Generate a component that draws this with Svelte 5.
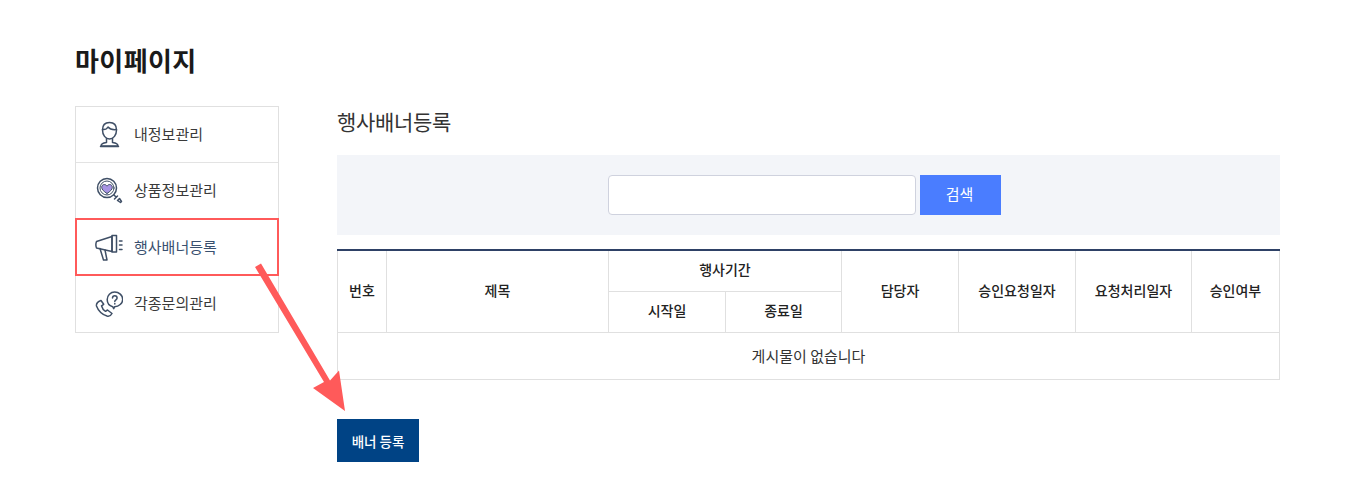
<script>
  const menu = [
    { label: '내정보관리', icon: 'user' },
    { label: '상품정보관리', icon: 'search' },
    { label: '행사배너등록', icon: 'horn', active: true },
    { label: '각종문의관리', icon: 'phone' }
  ];

  const tailHeads = ['담당자', '승인요청일자', '요청처리일자', '승인여부'];
</script>

<div class="page">
  <h1>마이페이지</h1>

  <div class="layout">
    <nav class="side">
      {#each menu as item}
        <a class="side-item" class:active={item.active} href="#top">
          <span class="icon">
            {#if item.icon === 'user'}
              <svg viewBox="0 0 28 28" width="28" height="28">
                <path d="M7.500 10c0-5 3-7.500 7-7.500s7 2.500 7 7.500c0 5-3 9-7 9s-7-4-7-9z" />
                <path d="M7.500 9.500c2.500.3 4.500-.7 5.500-2.500 1.500 1.800 4.500 3 8.500 2.500" />
                <path d="M11.500 18.500v4c-2.500.3-5.500.6-5.500 3.500h17c0-2.900-3-3.200-5.500-3.500v-4" />
                <path d="M5.500 26.500h18" />
              </svg>
            {:else if item.icon === 'search'}
              <svg viewBox="0 0 28 28" width="28" height="28">
                <circle cx="12" cy="12" r="9.500" />
                <circle cx="12" cy="12" r="7" stroke-width="1" />
                <path class="heart" d="M12 17.500c-3.400-2.200-5.300-4-5.300-6.200 0-1.700 1.100-2.800 2.600-2.800 1.100 0 2.100.6 2.700 1.700.6-1.100 1.600-1.700 2.700-1.700 1.500 0 2.600 1.100 2.600 2.800 0 2.200-1.900 4-5.300 6.200z" />
                <path d="M19 19l2 2M19.500 23l3-3M22.500 24.500l2-2 2 3-1 1z" />
              </svg>
            {:else if item.icon === 'horn'}
              <svg viewBox="0 0 28 28" width="28" height="28">
                <path d="M1.500 8.500l15.500-5v15l-15.500-3.500c-.8-2-.8-4.500 0-6.500z" />
                <path d="M17 2.500v16.500h4.500v-16.500z" />
                <path d="M5 15.500l3.500 11.500h3.500l-2-10" />
                <path d="M24.500 8h2.500M24.500 12h2.500M24.500 16.500h2.500" />
              </svg>
            {:else}
              <svg viewBox="0 0 28 28" width="28" height="28">
                <path d="M6 10.500c-2.500 1-5 3-4.500 5.500 1.500 4 5.500 8.500 10.500 10 2 .5 4-.5 5-2.500l-4.500-3.500-2 1.300c-1.800-1-3.500-3.500-4-5.500l2.200-1.500z" />
                <path d="M19.700 2c-4.200 0-7.500 3.300-7.500 7.500 0 3.500 2.300 6.300 5.500 7.200l1 2 1-2c4-.2 8-3.200 8-7.200 0-4.200-3.800-7.500-8-7.500z" />
                <path d="M17.500 8c0-3 4.600-3 4.600 0 0 1.800-2.300 1.800-2.300 3.500" />
                <path d="M19.800 13.400v.6" />
              </svg>
            {/if}
          </span>
          <span class="label">{item.label}</span>
        </a>
      {/each}
    </nav>

    <main class="content">
      <h2>행사배너등록</h2>

      <div class="search-box">
        <input type="text" aria-label="검색어" />
        <button type="button" class="search-btn">검색</button>
      </div>

      <table>
        <colgroup>
          <col style="width: 49px" />
          <col style="width: 222px" />
          <col style="width: 117px" />
          <col style="width: 116px" />
          <col style="width: 117px" />
          <col style="width: 117px" />
          <col style="width: 116px" />
          <col style="width: 88px" />
        </colgroup>
        <thead>
          <tr>
            <th rowspan="2">번호</th>
            <th rowspan="2">제목</th>
            <th colspan="2">행사기간</th>
            {#each tailHeads as head}
              <th rowspan="2">{head}</th>
            {/each}
          </tr>
          <tr>
            <th>시작일</th>
            <th>종료일</th>
          </tr>
        </thead>
        <tbody>
          <tr>
            <td colspan="8">게시물이 없습니다</td>
          </tr>
        </tbody>
      </table>

      <button type="button" class="add-btn">배너 등록</button>
    </main>
  </div>

  <!-- annotation arrow laid over the screenshot -->
  <svg class="arrow" viewBox="0 0 1361 504" width="1361" height="504" aria-hidden="true">
    <path d="M255 267l6-3.500 69 117 9-10 6 40.500-32-23 11-6z" />
  </svg>
</div>

<style>
  :global(body) {
    margin: 0;
    background: #fff;
  }

  .page {
    position: relative;
    width: 1361px;
    height: 504px;
    padding: 42px 0 0 75px;
    box-sizing: border-box;
    overflow: hidden;
    font-family: "Noto Sans CJK KR", "Noto Sans", sans-serif;
    color: #222;
  }

  h1 {
    margin: 0 0 26px;
    height: 38px;
    font-size: 26px;
    line-height: 36px;
    font-weight: 700;
    letter-spacing: 0.4px;
    color: #1a1a1a;
  }

  .layout {
    display: flex;
    align-items: flex-start;
    gap: 58px;
  }

  .side {
    display: flex;
    flex-direction: column;
    width: 204px;
    height: 227px;
    box-sizing: border-box;
    border: 1px solid #e0e0e0;
  }

  .side-item {
    position: relative;
    display: flex;
    align-items: center;
    gap: 11px;
    height: 56px;
    padding-left: 19px;
    box-sizing: border-box;
    border-bottom: 1px solid #e3e3e3;
    font-size: 15px;
    color: #3a3a3a;
    text-decoration: none;
  }

  .side-item:last-child {
    border-bottom: 0;
  }

  .side-item.active {
    height: 59px;
    margin: -1px -1px 0;
    padding-left: 18px;
    border: 2px solid #ff5a5a;
    color: #39506f;
  }

  .label {
    padding-bottom: 2px;
  }

  .side-item.active .label {
    padding-bottom: 0;
  }

  .side-item:last-child .label {
    padding-bottom: 4px;
  }

  .icon {
    display: flex;
    width: 28px;
    height: 28px;
  }

  .icon svg {
    fill: none;
    stroke: #3f4f66;
    stroke-width: 1.5;
    stroke-linecap: round;
    stroke-linejoin: round;
  }

  .icon .heart {
    fill: #a894e4;
    stroke-width: 1;
  }

  .content {
    width: 943px;
    margin-top: -1px;
  }

  h2 {
    margin: 0 0 17px;
    height: 33px;
    font-size: 21px;
    line-height: 33px;
    font-weight: 400;
    letter-spacing: -0.3px;
    color: #333;
  }

  .search-box {
    display: flex;
    justify-content: center;
    gap: 4px;
    padding: 20px 8px 20px 0;
    background: #f3f5f9;
  }

  .search-box input {
    width: 308px;
    height: 40px;
    box-sizing: border-box;
    border: 1px solid #cfd2de;
    border-radius: 4px;
    background: #fff;
    padding: 0 10px;
  }

  .search-btn {
    width: 81px;
    height: 40px;
    border: 0;
    padding: 0 2px 3px 0;
    background: #4a7dff;
    color: #fff;
    font: inherit;
    font-size: 15px;
  }

  table {
    width: 942px;
    margin-top: 14px;
    border-collapse: collapse;
    table-layout: fixed;
    border-top: 2px solid #2e4166;
    font-size: 14px;
  }

  th,
  td {
    border: 1px solid #e0e0e0;
    text-align: center;
    padding: 0 0 4px;
    height: 36px;
  }

  thead tr:first-child th {
    border-top: 0;
  }

  th {
    font-weight: 500;
    color: #222;
  }

  td {
    height: 44px;
    padding-bottom: 2px;
    font-size: 15px;
    color: #333;
  }

  .add-btn {
    display: block;
    width: 82px;
    height: 43px;
    margin-top: 39px;
    border: 0;
    padding: 0;
    background: #004385;
    color: #fff;
    font: inherit;
    font-size: 13.5px;
    font-weight: 500;
  }

  .arrow {
    position: absolute;
    left: 0;
    top: 0;
    pointer-events: none;
  }

  .arrow path {
    fill: #ff5a5a;
  }
</style>
